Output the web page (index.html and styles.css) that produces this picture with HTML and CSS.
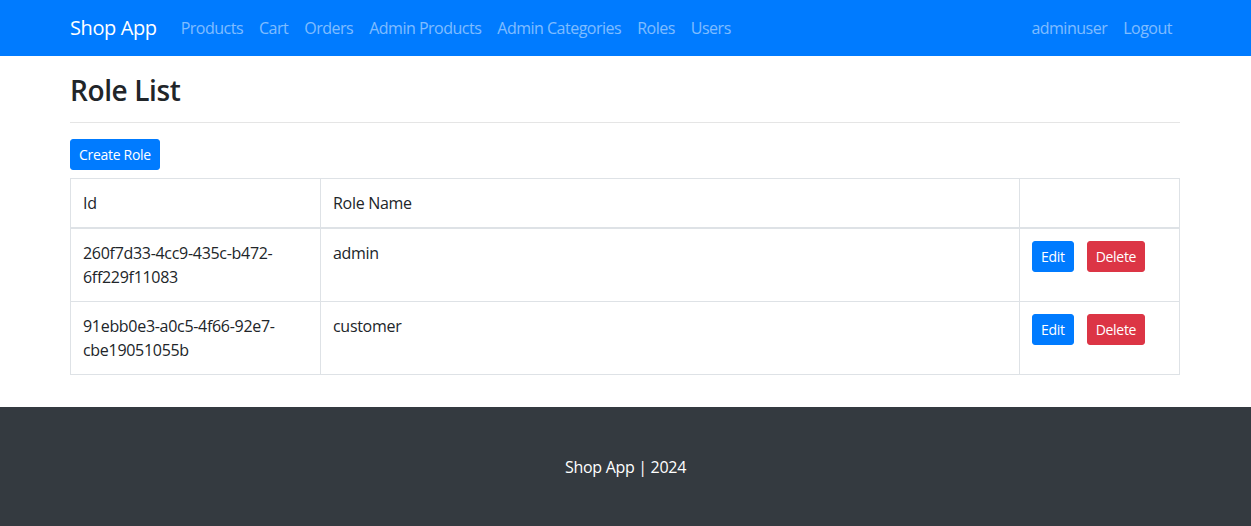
FILE: index.html
```html
<!DOCTYPE html>
<html lang="en">
<head>
<meta charset="utf-8">
<title>Role List</title>
<link rel="stylesheet" href="styles.css">
</head>
<body>
<nav class="navbar">
  <div class="container nav-inner">
    <a class="brand" href="#">Shop App</a>
    <ul class="nav-links">
      <li><a href="#">Products</a></li>
      <li><a href="#">Cart</a></li>
      <li><a href="#">Orders</a></li>
      <li><a href="#">Admin Products</a></li>
      <li><a href="#">Admin Categories</a></li>
      <li><a href="#">Roles</a></li>
      <li><a href="#">Users</a></li>
    </ul>
    <ul class="nav-links nav-right">
      <li><a href="#">adminuser</a></li>
      <li><a href="#">Logout</a></li>
    </ul>
  </div>
</nav>
<main class="container main">
  <h2 class="title">Role List</h2>
  <hr class="divider">
  <a class="btn btn-primary btn-sm" href="#">Create Role</a>
  <table class="table">
    <thead>
      <tr><th class="col-id">Id</th><th>Role Name</th><th class="col-act"></th></tr>
    </thead>
    <tbody>
      <tr>
        <td>260f7d33-4cc9-435c-b472-6ff229f11083</td>
        <td>admin</td>
        <td><a class="btn btn-primary btn-sm" href="#">Edit</a><a class="btn btn-danger btn-sm ml" href="#">Delete</a></td>
      </tr>
      <tr>
        <td>91ebb0e3-a0c5-4f66-92e7-cbe19051055b</td>
        <td>customer</td>
        <td><a class="btn btn-primary btn-sm" href="#">Edit</a><a class="btn btn-danger btn-sm ml" href="#">Delete</a></td>
      </tr>
    </tbody>
  </table>
</main>
<footer class="footer">
  <p>Shop App | 2024</p>
</footer>
</body>
</html>
```
FILE: styles.css
```css
* { box-sizing: border-box; }
html, body { margin: 0; }
body {
  font-family: "Open Sans", "Noto Sans", sans-serif;
  font-size: 16px;
  line-height: 1.5;
  color: #212529;
  background: #fff;
}
a { text-decoration: none; }
.container {
  width: 1140px;
  margin: 0 auto 0 55px;
  padding: 0 15px;
}
.navbar {
  background: #007bff;
  height: 56px;
}
.nav-inner {
  display: flex;
  align-items: center;
  height: 56px;
}
.brand {
  color: #fff;
  font-size: 20px;
  line-height: 30px;
  margin-right: 16px;
  letter-spacing: -0.4px;
}
.nav-links {
  list-style: none;
  margin: 0;
  padding: 0;
  display: flex;
}
.nav-links a {
  display: block;
  padding: 8px;
  color: rgba(255,255,255,0.5);
  letter-spacing: -0.5px;
}
.nav-right { margin-left: auto; }
.main { padding-top: 16px; padding-bottom: 16px; }
.title {
  font-size: 28px;
  font-weight: 600;
  line-height: 1.2;
  margin: 0;
  padding: 2px 0;
  letter-spacing: -0.4px;
}
.divider {
  border: 0;
  border-top: 1px solid rgba(0,0,0,0.1);
  margin: 12px 0 16px;
}
.btn {
  display: inline-block;
  color: #fff;
  border: 1px solid transparent;
  border-radius: 3px;
  letter-spacing: -0.3px;
}
.btn-sm {
  font-size: 14px;
  line-height: 21px;
  padding: 4px 8px;
}
.btn-primary { background: #007bff; border-color: #007bff; }
.btn-danger { background: #dc3545; border-color: #dc3545; }
.ml { margin-left: 13px; }
.table {
  width: 100%;
  border-collapse: collapse;
  margin-top: 8px;
  margin-bottom: 16px;
  border: 1px solid #dee2e6;
}
.table th, .table td {
  border: 1px solid #dee2e6;
  padding: 12px;
  text-align: left;
  vertical-align: top;
  font-weight: 400;
  letter-spacing: -0.3px;
}
.table thead th { border-bottom-width: 2px; }
.col-id { width: 250px; }
.col-act { width: 160px; }
.footer {
  background: #343a40;
  color: #fff;
  text-align: center;
  padding: 48px 0;
}
.footer p { margin: 0 0 16px; letter-spacing: -0.3px; }
```
